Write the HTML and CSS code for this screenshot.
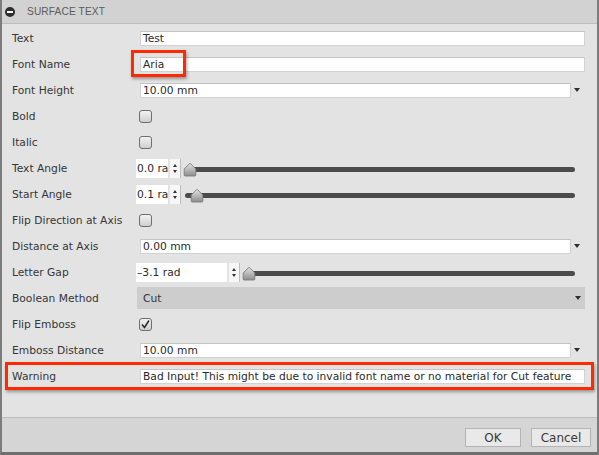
FILE: index.html
```html
<!DOCTYPE html>
<html>
<head>
<meta charset="utf-8">
<link rel="stylesheet" href="styles.css">
</head>
<body>
<div class="window">
  <div class="titlebar">
    <span class="collapse"></span>
    <span class="title">SURFACE TEXT</span>
  </div>
  <div class="form">
    <div class="row"><div class="label">Text</div><div class="ctrl"><div class="input">Test</div></div></div>
    <div class="row"><div class="label">Font Name</div><div class="ctrl"><div class="input">Aria</div></div></div>
    <div class="row"><div class="label">Font Height</div><div class="ctrl"><div class="input">10.00 mm</div><span class="arrow"></span></div></div>
    <div class="row"><div class="label">Bold</div><div class="ctrl"><span class="check"></span></div></div>
    <div class="row"><div class="label">Italic</div><div class="ctrl"><span class="check"></span></div></div>
    <div class="row"><div class="label">Text Angle</div><div class="ctrl">
      <div class="spin short"><span class="spin-val">0.0 rad</span></div>
      <span class="spinner"><i class="up"></i><i class="down"></i></span>
      <div class="slider"><span class="track"></span><span class="thumb" style="left:2px"><svg viewBox="0 0 14 15" width="14" height="15"><defs><linearGradient id="g1" x1="0" y1="0" x2="0" y2="1"><stop offset="0" stop-color="#e4e4e4"/><stop offset="1" stop-color="#8c8c8c"/></linearGradient></defs><path d="M7 1.2 L12.8 7 V13 Q12.8 14 11.8 14 H2.2 Q1.2 14 1.2 13 V7 Z" fill="url(#g1)" stroke="#7a7a7a" stroke-width="0.9"/></svg></span></div>
    </div></div>
    <div class="row"><div class="label">Start Angle</div><div class="ctrl">
      <div class="spin short"><span class="spin-val">0.1 rad</span></div>
      <span class="spinner"><i class="up"></i><i class="down"></i></span>
      <div class="slider"><span class="track"></span><span class="thumb" style="left:9px"><svg viewBox="0 0 14 15" width="14" height="15"><path d="M7 1.2 L12.8 7 V13 Q12.8 14 11.8 14 H2.2 Q1.2 14 1.2 13 V7 Z" fill="url(#g1)" stroke="#7a7a7a" stroke-width="0.9"/></svg></span></div>
    </div></div>
    <div class="row"><div class="label">Flip Direction at Axis</div><div class="ctrl"><span class="check"></span></div></div>
    <div class="row"><div class="label">Distance at Axis</div><div class="ctrl"><div class="input">0.00 mm</div><span class="arrow"></span></div></div>
    <div class="row"><div class="label">Letter Gap</div><div class="ctrl">
      <div class="spin long"><span class="spin-val">–3.1 rad</span></div>
      <span class="spinner"><i class="up"></i><i class="down"></i></span>
      <div class="slider"><span class="track"></span><span class="thumb" style="left:2px"><svg viewBox="0 0 14 15" width="14" height="15"><path d="M7 1.2 L12.8 7 V13 Q12.8 14 11.8 14 H2.2 Q1.2 14 1.2 13 V7 Z" fill="url(#g1)" stroke="#7a7a7a" stroke-width="0.9"/></svg></span></div>
    </div></div>
    <div class="row"><div class="label">Boolean Method</div><div class="ctrl"><div class="select"><span>Cut</span><span class="arrow"></span></div></div></div>
    <div class="row"><div class="label">Flip Emboss</div><div class="ctrl"><span class="check checked"><svg viewBox="0 0 13 13" width="13" height="13"><path d="M3 6.5 L5.5 9.5 L10 2.5" fill="none" stroke="#222" stroke-width="1.4"/></svg></span></div></div>
    <div class="row"><div class="label">Emboss Distance</div><div class="ctrl"><div class="input">10.00 mm</div><span class="arrow"></span></div></div>
    <div class="row"><div class="label">Warning</div><div class="ctrl"><div class="input">Bad Input! This might be due to invalid font name or no material for Cut feature</div></div></div>
  </div>
  <div class="footer">
    <button class="btn ok">OK</button>
    <button class="btn cancel">Cancel</button>
  </div>
  <div class="hl hl-font"></div>
  <div class="hl hl-warn"></div>
</div>
</body>
</html>
```
FILE: styles.css
```css
html, body {
  margin: 0;
  padding: 0;
  background: #e3e3e3;
}
.window {
  position: relative;
  width: 599px;
  height: 455px;
  box-sizing: border-box;
  border-left: 2px solid #7c7c7c;
  border-right: 2px solid #7c7c7c;
  border-bottom: 3px solid #6e6e6e;
  background: #e3e3e3;
  font-family: "DejaVu Sans", Verdana, sans-serif;
  font-size: 10.7px;
  color: #363636;
  display: flex;
  flex-direction: column;
}
.titlebar {
  height: 23px;
  border-bottom: 1px solid #bdbdbd;
  background: #d2d2d2;
  display: flex;
  align-items: center;
  padding-left: 3px;
}
.collapse {
  position: relative;
  width: 10px;
  height: 10px;
  border-radius: 50%;
  background: #2e2e2e;
  margin-right: 12px;
}
.collapse::after {
  content: "";
  position: absolute;
  left: 2px;
  top: 4px;
  width: 6px;
  height: 2px;
  background: #fff;
}
.title {
  color: #5c5c5c;
  font-family: "Liberation Sans", Arial, sans-serif;
  font-size: 10.2px;
  letter-spacing: 0.1px;
}
.form {
  padding: 1px 12px 0 10px;
  display: flex;
  flex-direction: column;
}
.row {
  height: 26px;
  display: flex;
  align-items: center;
}
.label {
  width: 124px;
  flex: none;
  white-space: nowrap;
}
.ctrl {
  flex: 1;
  display: flex;
  align-items: center;
  height: 100%;
}
.input {
  flex: 1;
  margin-left: 4px;
  height: 15px;
  box-sizing: border-box;
  background: #fff;
  border: 1px solid #d2d2d2;
  border-top-color: #c4c4c4;
  padding-left: 2px;
  line-height: 13px;
  white-space: nowrap;
  overflow: hidden;
  color: #2a2a2a;
}
.arrow {
  width: 14px;
  flex: none;
  display: flex;
  align-items: center;
  padding-left: 3px;
  box-sizing: border-box;
}
.arrow::before {
  content: "";
  border-left: 3px solid transparent;
  border-right: 3px solid transparent;
  border-top: 4px solid #2e2e2e;
}
.check {
  margin-left: 3px;
  width: 13px;
  height: 13px;
  box-sizing: border-box;
  border: 1px solid #6f6f6f;
  border-radius: 3px;
  background: linear-gradient(#f2f2f2, #cfcfcf);
  display: block;
  position: relative;
}
.check svg {
  position: absolute;
  left: -1px;
  top: -1px;
}
.spin {
  height: 19px;
  background: #fff;
  overflow: hidden;
  white-space: nowrap;
  line-height: 19px;
  padding-left: 1px;
  box-sizing: border-box;
  flex: none;
  color: #2a2a2a;
}
.spin.short { width: 32px; }
.spin.long { width: 91px; }
.spinner {
  width: 10px;
  height: 19px;
  margin-left: 2px;
  background: #f7f7f7;
  border-right: 1px solid #bdbdbd;
  display: flex;
  flex-direction: column;
  align-items: center;
  justify-content: center;
  gap: 3px;
  flex: none;
}
.spinner i {
  display: block;
  border-left: 2px solid transparent;
  border-right: 2px solid transparent;
}
.spinner .up { border-bottom: 3px solid #333; }
.spinner .down { border-top: 3px solid #333; }
.slider {
  flex: 1;
  position: relative;
  height: 19px;
  margin-right: 10px;
}
.track {
  position: absolute;
  left: 4px;
  right: 0;
  top: 8px;
  height: 5px;
  border-radius: 3px;
  background: #4b4b4b;
}
.thumb {
  position: absolute;
  top: 3px;
  width: 14px;
  height: 15px;
}
.thumb svg { display: block; }
.select {
  flex: 1;
  margin-left: 1px;
  height: 22px;
  background: #cdcdcd;
  display: flex;
  align-items: center;
  justify-content: space-between;
  padding-left: 6px;
  box-sizing: border-box;
}
.select .arrow { width: 10px; padding-left: 0; }
.footer {
  margin-top: auto;
  height: 35px;
  box-sizing: border-box;
  border-top: 1px solid #bcbcbc;
  background: #d5d5d5;
  display: flex;
  justify-content: flex-end;
  align-items: flex-start;
  padding: 10px 6px 0 0;
  gap: 10px;
}
.btn {
  height: 19px;
  box-sizing: border-box;
  border: 1px solid #b4b4b4;
  background: #e9e9e9;
  font-family: "DejaVu Sans", Verdana, sans-serif;
  font-size: 12px;
  color: #3a3a3a;
  padding: 0;
  margin: 0;
}
.btn.ok { width: 56px; }
.btn.cancel { width: 60px; }
.hl {
  position: absolute;
  border: 3px solid #ff2a00;
  box-shadow: 1px 2px 3px rgba(0,0,0,0.35);
  box-sizing: border-box;
}
.hl-font {
  left: 129px;
  top: 50px;
  width: 55px;
  height: 27px;
}
.hl-warn {
  left: 3px;
  top: 362px;
  width: 589px;
  height: 28px;
}
```
